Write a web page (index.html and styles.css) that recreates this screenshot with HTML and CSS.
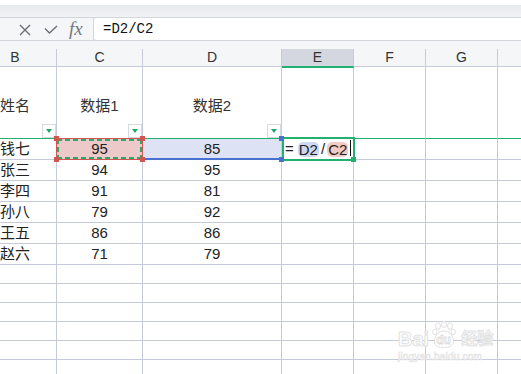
FILE: index.html
```html
<!DOCTYPE html>
<html>
<head>
<meta charset="utf-8">
<link rel="stylesheet" href="styles.css">
</head>
<body>
<div class="app">
  <div class="topline"></div>
  <div class="ribbon"></div>
  <div class="fbar">
    <div class="ficons">
      <svg class="ic ic-x" width="12" height="12" viewBox="0 0 12 12"><path d="M1 1L11 11M11 1L1 11" stroke="#6b6e75" stroke-width="1.4" fill="none"/></svg>
      <svg class="ic ic-check" width="14" height="10" viewBox="0 0 14 10"><path d="M1 3.5L5.5 8L13 1" stroke="#6b6e75" stroke-width="1.4" fill="none"/></svg>
      <span class="fx">fx</span>
    </div>
    <div class="finput">=D2/C2</div>
  </div>
  <div class="gap"></div>
  <div class="sheet">
    <div class="row hdr">
      <div class="c">B</div><div class="c">C</div><div class="c">D</div><div class="c on">E</div><div class="c">F</div><div class="c">G</div><div class="c"></div>
    </div>
    <div class="row r1">
      <div class="c"><span class="t">姓名</span><span class="flt"></span></div>
      <div class="c"><span class="t">数据1</span><span class="flt"></span></div>
      <div class="c"><span class="t">数据2</span><span class="flt"></span></div>
      <div class="c"></div><div class="c"></div><div class="c"></div><div class="c"></div>
    </div>
    <div class="row dr">
      <div class="c">钱七</div>
      <div class="c csel">95<span class="selbox"></span></div>
      <div class="c dsel">85<span class="sq sq-bt"></span><span class="sq sq-bb"></span></div>
      <div class="c edit"><span class="eq">=</span><span class="chip chip-d">D2</span><span class="sl">/</span><span class="chip chip-c">C2</span><span class="cur"></span><span class="ebox"></span></div>
      <div class="c"></div><div class="c"></div><div class="c"></div>
    </div>
    <div class="row dr"><div class="c">张三</div><div class="c">94</div><div class="c">95</div><div class="c"></div><div class="c"></div><div class="c"></div><div class="c"></div></div>
    <div class="row dr"><div class="c">李四</div><div class="c">91</div><div class="c">81</div><div class="c"></div><div class="c"></div><div class="c"></div><div class="c"></div></div>
    <div class="row dr"><div class="c">孙八</div><div class="c">79</div><div class="c">92</div><div class="c"></div><div class="c"></div><div class="c"></div><div class="c"></div></div>
    <div class="row dr"><div class="c">王五</div><div class="c">86</div><div class="c">86</div><div class="c"></div><div class="c"></div><div class="c"></div><div class="c"></div></div>
    <div class="row dr"><div class="c">赵六</div><div class="c">71</div><div class="c">79</div><div class="c"></div><div class="c"></div><div class="c"></div><div class="c"></div></div>
    <div class="row er"><div class="c"></div><div class="c"></div><div class="c"></div><div class="c"></div><div class="c"></div><div class="c"></div><div class="c"></div></div>
    <div class="row er"><div class="c"></div><div class="c"></div><div class="c"></div><div class="c"></div><div class="c"></div><div class="c"></div><div class="c"></div></div>
    <div class="row er"><div class="c"></div><div class="c"></div><div class="c"></div><div class="c"></div><div class="c"></div><div class="c"></div><div class="c"></div></div>
    <div class="row er"><div class="c"></div><div class="c"></div><div class="c"></div><div class="c"></div><div class="c"></div><div class="c"></div><div class="c"></div></div>
    <div class="row er"><div class="c"></div><div class="c"></div><div class="c"></div><div class="c"></div><div class="c"></div><div class="c"></div><div class="c"></div></div>
    <div class="row er"><div class="c"></div><div class="c"></div><div class="c"></div><div class="c"></div><div class="c"></div><div class="c"></div><div class="c"></div></div>
  </div>
  <div class="wm">
    <div class="wm-top">
      <span class="wm-bai">Bai</span>
      <span class="wm-paw">
        <svg width="24" height="28" viewBox="0 0 24 28"><g fill="#fff" stroke="#e0e0e0" stroke-width="1"><ellipse cx="6" cy="5" rx="2.5" ry="3.2"/><ellipse cx="12" cy="3.5" rx="2.5" ry="3"/><ellipse cx="18" cy="5" rx="2.5" ry="3.2"/><ellipse cx="2.8" cy="11" rx="2.2" ry="2.8"/><ellipse cx="21.2" cy="11" rx="2.2" ry="2.8"/><path d="M12 10C6 10 2 16 2.5 21C3 25 7 26.5 12 26.5C17 26.5 21 25 21.5 21C22 16 18 10 12 10Z"/></g></svg>
        <span class="wm-du">du</span>
      </span>
      <span class="wm-jy">经验</span>
    </div>
    <div class="wm-url">jingyan.baidu.com</div>
  </div>
</div>
</body>
</html>
```
FILE: styles.css
```css
html, body {
  margin: 0;
  padding: 0;
  background: #fff;
}
.app {
  position: relative;
  width: 521px;
  height: 374px;
  overflow: hidden;
  background: #fff;
  font-family: "Liberation Sans", "Noto Sans CJK SC", sans-serif;
  color: #222;
}
.topline {
  height: 5px;
  background: #fff;
}
.ribbon {
  height: 12px;
  background: linear-gradient(#e8e9ec, #f1f2f4);
}
.fbar {
  box-sizing: border-box;
  display: flex;
  height: 24px;
  border-top: 1px solid #d3d6dd;
  border-bottom: 1px solid #d3d6dd;
  background: #f5f6f8;
}
.ficons {
  width: 93px;
  display: flex;
  align-items: center;
}
.ic-x {
  margin-left: 19px;
  margin-top: 1px;
}
.ic-check {
  margin-left: 13px;
  margin-top: 1px;
}
.fx {
  margin-left: 11px;
  font-family: "Liberation Serif", serif;
  font-style: italic;
  font-size: 19px;
  color: #74777e;
  line-height: 20px;
  margin-top: -1px;
}
.finput {
  flex: 1;
  margin: -1px 0;
  border: 1px solid #d3d6dd;
  border-right: 0;
  border-radius: 3px 0 0 3px;
  background: #fff;
  font-family: "Liberation Mono", monospace;
  font-size: 14px;
  line-height: 22px;
  padding-left: 9px;
  color: #111;
}
.gap {
  height: 8px;
  background: #f5f6f8;
}
.sheet {
  margin-left: -26px;
}
.row {
  display: grid;
  grid-template-columns: 83px 86px 139px 72px 72px 72px 60px;
}
.c {
  box-sizing: border-box;
  border-right: 1px solid #c7cbd9;
  border-bottom: 1px solid #c7cbd9;
  font-size: 15px;
  text-align: center;
  position: relative;
}
.hdr .c {
  height: 18px;
  line-height: 17px;
  font-size: 14px;
  background: #f5f6f8;
  color: #333;
}
.hdr .c.on {
  background: #d4d7df;
  border-bottom-color: #22b070;
  box-shadow: 0 1px 0 #22b070;
  z-index: 2;
}
.r1 .c {
  height: 72px;
  border-bottom-color: #22b070;
  display: grid;
}
.r1 .t {
  grid-area: 1 / 1;
  align-self: center;
  padding-top: 4px;
  color: #333;
}
.flt {
  grid-area: 1 / 1;
  align-self: end;
  justify-self: end;
  box-sizing: border-box;
  width: 14px;
  height: 14px;
  border: 1px solid #d6d9e0;
  background: #fff;
  position: relative;
}
.flt::after {
  content: "";
  position: absolute;
  left: 3px;
  top: 4px;
  border-left: 3px solid transparent;
  border-right: 3px solid transparent;
  border-top: 4px solid #22a86a;
}
.dr .c {
  height: 21px;
  line-height: 20px;
}
.er .c {
  height: 19px;
}
.csel {
  background: #edcac9;
}
.selbox {
  position: absolute;
  left: -1px;
  top: -1px;
  right: -1px;
  bottom: -1px;
  border: 1px solid #d25552;
  z-index: 3;
}
.selbox::before {
  content: "";
  position: absolute;
  inset: 0;
  background:
    repeating-linear-gradient(90deg, #21ad6c 0 5px, transparent 5px 8px) top left / 100% 2px no-repeat,
    repeating-linear-gradient(90deg, #21ad6c 0 5px, transparent 5px 8px) bottom left / 100% 2px no-repeat,
    repeating-linear-gradient(180deg, #21ad6c 0 5px, transparent 5px 8px) top left / 2px 100% no-repeat,
    repeating-linear-gradient(180deg, #21ad6c 0 5px, transparent 5px 8px) top right / 2px 100% no-repeat;
}
.selbox::after {
  content: "";
  position: absolute;
  left: -3px;
  top: -3px;
  right: -3px;
  bottom: -3px;
  background:
    linear-gradient(#d25552, #d25552) top left / 5px 5px no-repeat,
    linear-gradient(#d25552, #d25552) top right / 5px 5px no-repeat,
    linear-gradient(#d25552, #d25552) bottom left / 5px 5px no-repeat,
    linear-gradient(#d25552, #d25552) bottom right / 5px 5px no-repeat;
}
.dsel {
  background: #dde3f5;
  border-bottom-color: #4a71d2;
  box-shadow: inset 0 -1px 0 #4a71d2;
}
.sq {
  position: absolute;
  width: 5px;
  height: 5px;
  background: #4a71d2;
  z-index: 4;
}
.sq-bt {
  right: -3px;
  top: -3px;
}
.sq-bb {
  right: -3px;
  bottom: -3px;
}
.edit {
  text-align: left;
  display: flex;
  align-items: center;
  padding-left: 3px;
  color: #222;
}
.eq {
  margin-right: 4px;
}
.chip {
  display: inline-block;
  height: 15px;
  line-height: 15px;
  padding: 0 1px;
  border-radius: 5px;
}
.chip-d {
  background: #cdd8f2;
}
.chip-c {
  background: #f3cbc4;
}
.sl {
  margin: 0 2px;
}
.cur {
  display: inline-block;
  width: 1px;
  height: 16px;
  background: #111;
  margin-left: 2px;
  margin-top: -2px;
}
.ebox {
  position: absolute;
  left: 0;
  top: -2px;
  right: -2px;
  bottom: -2px;
  border: 2px solid #22b070;
  z-index: 3;
}
.ebox::after {
  content: "";
  position: absolute;
  right: -3px;
  bottom: -3px;
  width: 5px;
  height: 5px;
  background: #22b070;
}
.wm {
  position: absolute;
  left: 398px;
  top: 316px;
  width: 96px;
  color: #fff;
}
.wm-top {
  display: flex;
  align-items: flex-end;
  height: 33px;
}
.wm-bai, .wm-jy {
  font-size: 20px;
  font-weight: bold;
  -webkit-text-stroke: 1px #e2e2e2;
  line-height: 20px;
}
.wm-paw {
  position: relative;
  width: 24px;
  height: 28px;
  margin: 0 3px;
}
.wm-paw svg {
  display: block;
}
.wm-du {
  position: absolute;
  left: 4px;
  top: 12px;
  font-size: 12px;
  font-weight: bold;
  color: #fff;
  -webkit-text-stroke: 0.8px #dcdcdc;
}
.wm-jy {
  font-size: 16px;
  margin-left: 2px;
}
.wm-url {
  font-size: 10px;
  color: #fff;
  -webkit-text-stroke: 0.6px #e2e2e2;
  margin-top: 2px;
  letter-spacing: 0.2px;
}
```
